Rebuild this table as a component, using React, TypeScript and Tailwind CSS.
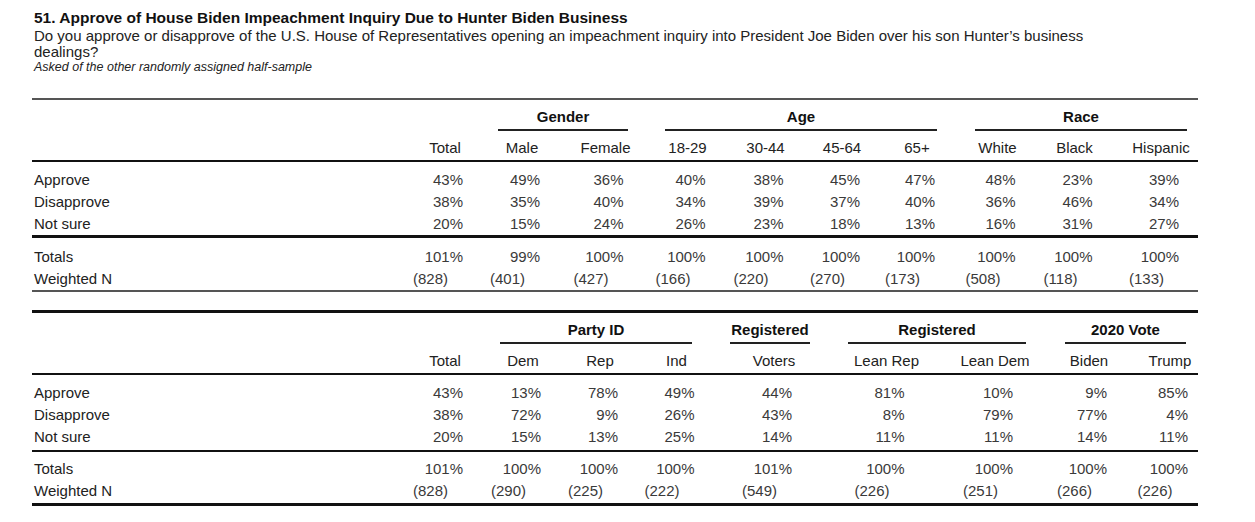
type Col = { label: string; w: string; shift: string };
type Group = { label: string; w: string; inset: string };
type Row = { label: string; values: string[] };

const t1Cols: Col[] = [
  { label: 'Total', w: 'w-[76px]', shift: '' },
  { label: 'Male', w: 'w-[78px]', shift: '' },
  { label: 'Female', w: 'w-[89px]', shift: '' },
  { label: '18-29', w: 'w-[75px]', shift: '' },
  { label: '30-44', w: 'w-[81px]', shift: '' },
  { label: '45-64', w: 'w-[72px]', shift: '' },
  { label: '65+', w: 'w-[78px]', shift: '' },
  { label: 'White', w: 'w-[83px]', shift: '' },
  { label: 'Black', w: 'w-[71px]', shift: '' },
  { label: 'Hispanic', w: 'w-[88px]', shift: 'pl-[14px]' },
];

const t1Groups: Group[] = [
  { label: 'Gender', w: 'w-[167px]', inset: 'ml-[15px] mr-[22px]' },
  { label: 'Age', w: 'w-[306px]', inset: 'ml-[15px] mr-[19px]' },
  { label: 'Race', w: 'w-[242px]', inset: 'ml-[19px] mr-[11px]' },
];

const t1Main: Row[] = [
  { label: 'Approve', values: ['43', '49', '36', '40', '38', '45', '47', '48', '23', '39'] },
  { label: 'Disapprove', values: ['38', '35', '40', '34', '39', '37', '40', '36', '46', '34'] },
  { label: 'Not sure', values: ['20', '15', '24', '26', '23', '18', '13', '16', '31', '27'] },
];

const t1Totals = ['101', '99', '100', '100', '100', '100', '100', '100', '100', '100'];
const t1N = ['828', '401', '427', '166', '220', '270', '173', '508', '118', '133'];

const t2Cols: Col[] = [
  { label: 'Total', w: 'w-[76px]', shift: '' },
  { label: 'Dem', w: 'w-[80px]', shift: '' },
  { label: 'Rep', w: 'w-[74px]', shift: '' },
  { label: 'Ind', w: 'w-[79px]', shift: '' },
  { label: 'Voters', w: 'w-[116px]', shift: '' },
  { label: 'Lean Rep', w: 'w-[109px]', shift: '' },
  { label: 'Lean Dem', w: 'w-[108px]', shift: '' },
  { label: 'Biden', w: 'w-[80px]', shift: '' },
  { label: 'Trump', w: 'w-[69px]', shift: 'pl-[13px]' },
];

const t2Groups: Group[] = [
  { label: 'Party ID', w: 'w-[233px]', inset: 'ml-[17px] mr-[24px]' },
  { label: 'Registered', w: 'w-[116px]', inset: 'ml-[14px] mr-[22px]' },
  { label: 'Registered', w: 'w-[217px]', inset: 'ml-[16px] mr-[23px]' },
  { label: '2020 Vote', w: 'w-[149px]', inset: 'ml-[16px] mr-[12px]' },
];

const t2Main: Row[] = [
  { label: 'Approve', values: ['43', '13', '78', '49', '44', '81', '10', '9', '85'] },
  { label: 'Disapprove', values: ['38', '72', '9', '26', '43', '8', '79', '77', '4'] },
  { label: 'Not sure', values: ['20', '15', '13', '25', '14', '11', '11', '14', '11'] },
];

const t2Totals = ['101', '100', '100', '100', '101', '100', '100', '100', '100'];
const t2N = ['828', '290', '225', '222', '549', '226', '251', '266', '226'];

function PctRow({ label, values, cols }: { label: string; values: string[]; cols: Col[] }) {
  return (
    <div className="flex h-[22px] items-center">
      <div className="w-[375px] pl-[2px] text-[#222]">{label}</div>
      {values.map((v, i) => (
        <div key={i} className={`${cols[i].w} ${cols[i].shift} flex justify-center`}>
          <div className="flex w-[36px] justify-end text-[#3a3a3a]">{v}%</div>
        </div>
      ))}
    </div>
  );
}

function NRow({ values, cols }: { values: string[]; cols: Col[] }) {
  return (
    <div className="flex h-[22px] items-center">
      <div className="w-[375px] pl-[2px] text-[#222]">Weighted N</div>
      {values.map((v, i) => (
        <div key={i} className={`${cols[i].w} ${cols[i].shift} flex justify-center`}>
          <div className="mr-[30px] flex w-[36px] justify-end text-[#3a3a3a]">({v})</div>
        </div>
      ))}
    </div>
  );
}

function Crosstab({
  cols,
  groups,
  main,
  totals,
  n,
  topRule,
  midRule,
  totalsGap,
  bottomRule,
}: {
  cols: Col[];
  groups: Group[];
  main: Row[];
  totals: string[];
  n: string[];
  topRule: string;
  midRule: string;
  totalsGap: string;
  bottomRule: string;
}) {
  return (
    <div className="w-[1166px]">
      <div className={topRule} />
      <div className="mt-[7px] flex">
        <div className="w-[451px]" />
        {groups.map((g, i) => (
          <div key={i} className={g.w}>
            <div className={`${g.inset} flex flex-col`}>
              <div className="h-[20px] text-center font-bold leading-[20px] text-[#111]">{g.label}</div>
              <div className="mt-[2px] h-[2px] bg-[#222]" />
            </div>
          </div>
        ))}
      </div>
      <div className="mt-[7px] flex h-[20px] items-center">
        <div className="w-[375px]" />
        {cols.map((c, i) => (
          <div key={i} className={`${c.w} ${c.shift} flex justify-center text-[#222]`}>
            {c.label}
          </div>
        ))}
      </div>
      <div className="mt-[2px] h-[2px] bg-[#111]" />
      <div className="mt-[7px]">
        {main.map((r) => (
          <PctRow key={r.label} label={r.label} values={r.values} cols={cols} />
        ))}
      </div>
      <div className={midRule} />
      <div className={totalsGap}>
        <PctRow label="Totals" values={totals} cols={cols} />
        <NRow values={n} cols={cols} />
      </div>
      <div className={bottomRule} />
    </div>
  );
}

export default function App() {
  return (
    <div className="h-[522px] w-[1255px] overflow-hidden bg-white font-['Liberation_Sans',Arial,sans-serif] text-[15px]">
      <div className="pl-[34px] pt-[9px]">
        <div className="text-[15.5px] font-bold leading-[18px] text-[#111]">
          51. Approve of House Biden Impeachment Inquiry Due to Hunter Biden Business
        </div>
        <div className="mt-[1px] text-[15px] leading-[16px] text-[#222]">
          Do you approve or disapprove of the U.S. House of Representatives opening an impeachment inquiry into
          President Joe Biden over his son Hunter’s business
          <br />
          dealings?
        </div>
        <div className="text-[12.5px] italic leading-[15px] text-[#222]">
          Asked of the other randomly assigned half-sample
        </div>
      </div>
      <div className="ml-[32px] mt-[23px] flex flex-col">
        <Crosstab
          cols={t1Cols}
          groups={t1Groups}
          main={t1Main}
          totals={t1Totals}
          n={t1N}
          topRule="h-[2px] bg-[#555]"
          midRule="h-[3px] bg-[#111]"
          totalsGap="mt-[8px]"
          bottomRule="h-[2px] bg-[#555]"
        />
        <div className="h-[18px]" />
        <Crosstab
          cols={t2Cols}
          groups={t2Groups}
          main={t2Main}
          totals={t2Totals}
          n={t2N}
          topRule="h-[3px] bg-[#111]"
          midRule="mt-[2px] h-[2px] bg-[#111]"
          totalsGap="mt-[6px]"
          bottomRule="mt-[1px] h-[3px] bg-[#111]"
        />
      </div>
    </div>
  );
}
